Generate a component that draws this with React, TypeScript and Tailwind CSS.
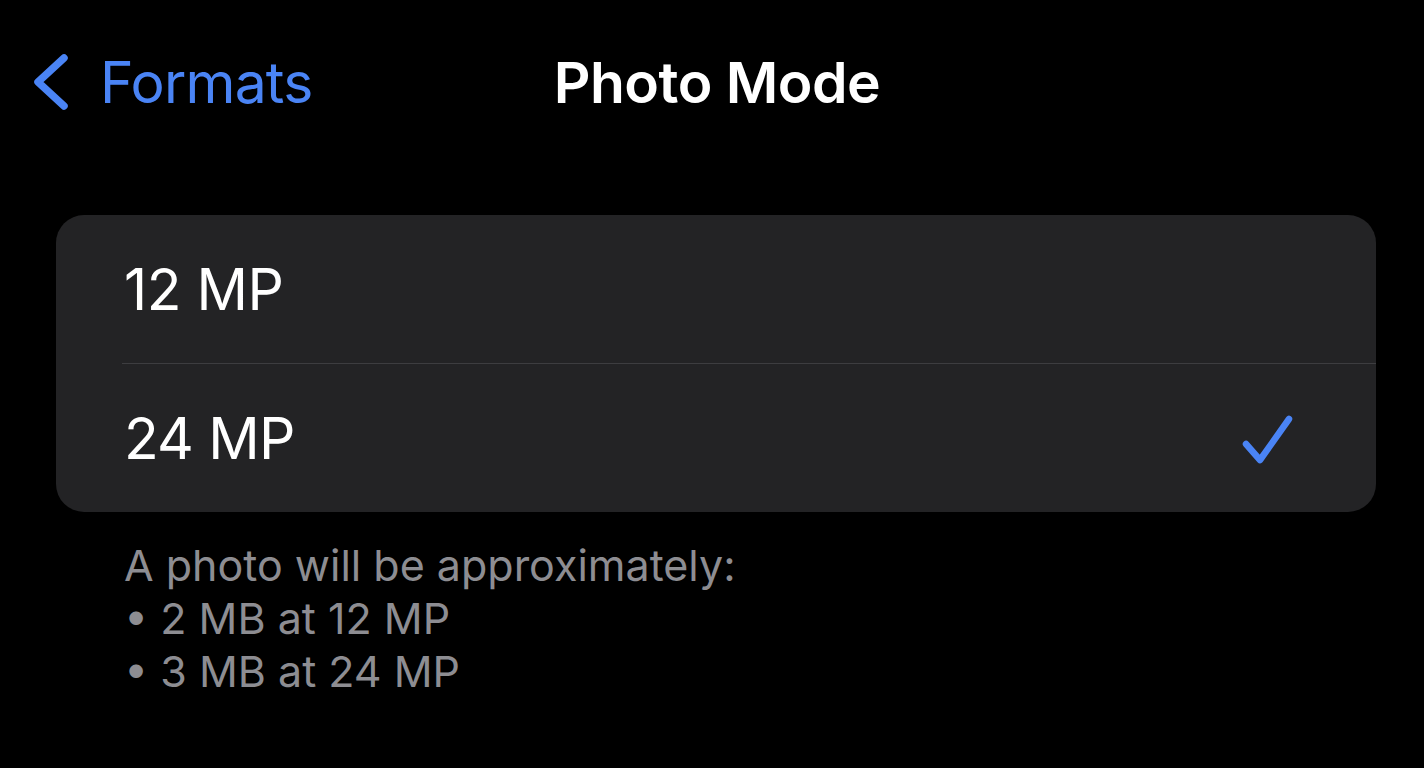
export default function App() {
  return (
    <div className="min-h-screen bg-black text-white" style={{ fontFamily: 'Inter, "Noto Sans", sans-serif' }}>
      {/* Navigation bar */}
      <div className="grid h-[164px] grid-cols-[1fr_auto_1fr] items-center px-[33px]">
        <div className="flex items-center gap-[31px] text-[#4a84f5]">
          <svg width="36" height="56" viewBox="0 0 36 56" fill="none">
            <path d="M31 4 L5 28 L31 52" stroke="currentColor" strokeWidth="7.5" strokeLinecap="round" strokeLinejoin="round" />
          </svg>
          <span className="text-[57px] leading-none tracking-[-0.8px]">Formats</span>
        </div>
        <div className="pl-[10px] text-[57px] font-semibold leading-none tracking-[-0.5px]">Photo Mode</div>
        <div />
      </div>

      <div className="pl-[56px] pr-[48px]">
        {/* Options card */}
        <div className="mt-[51px] overflow-hidden rounded-[28px] bg-[#232325]">
          <div className="flex h-[148px] items-center pl-[68px] pr-[82px]">
            <span className="text-[57px] leading-none tracking-[-0.5px]">12 MP</span>
          </div>
          <div className="ml-[66px] h-px bg-[#3d3d40]" />
          <div className="flex h-[148px] items-center justify-between pl-[68px] pr-[82px]">
            <span className="text-[57px] leading-none tracking-[-0.8px]">24 MP</span>
            <svg width="52" height="50" viewBox="0 0 52 50" fill="none" className="mt-[4px] text-[#4a84f5]">
              <path d="M4 29 L18 45 L47 4" stroke="currentColor" strokeWidth="6.5" strokeLinecap="round" strokeLinejoin="round" />
            </svg>
          </div>
        </div>

        {/* Footer note */}
        <div className="mt-[27px] pl-[68px] text-[43px] leading-[53px] text-[#8d8d92]">
          <p>A photo will be approximately:</p>
          <p>• 2 MB at 12 MP</p>
          <p>• 3 MB at 24 MP</p>
        </div>
      </div>
    </div>
  );
}
